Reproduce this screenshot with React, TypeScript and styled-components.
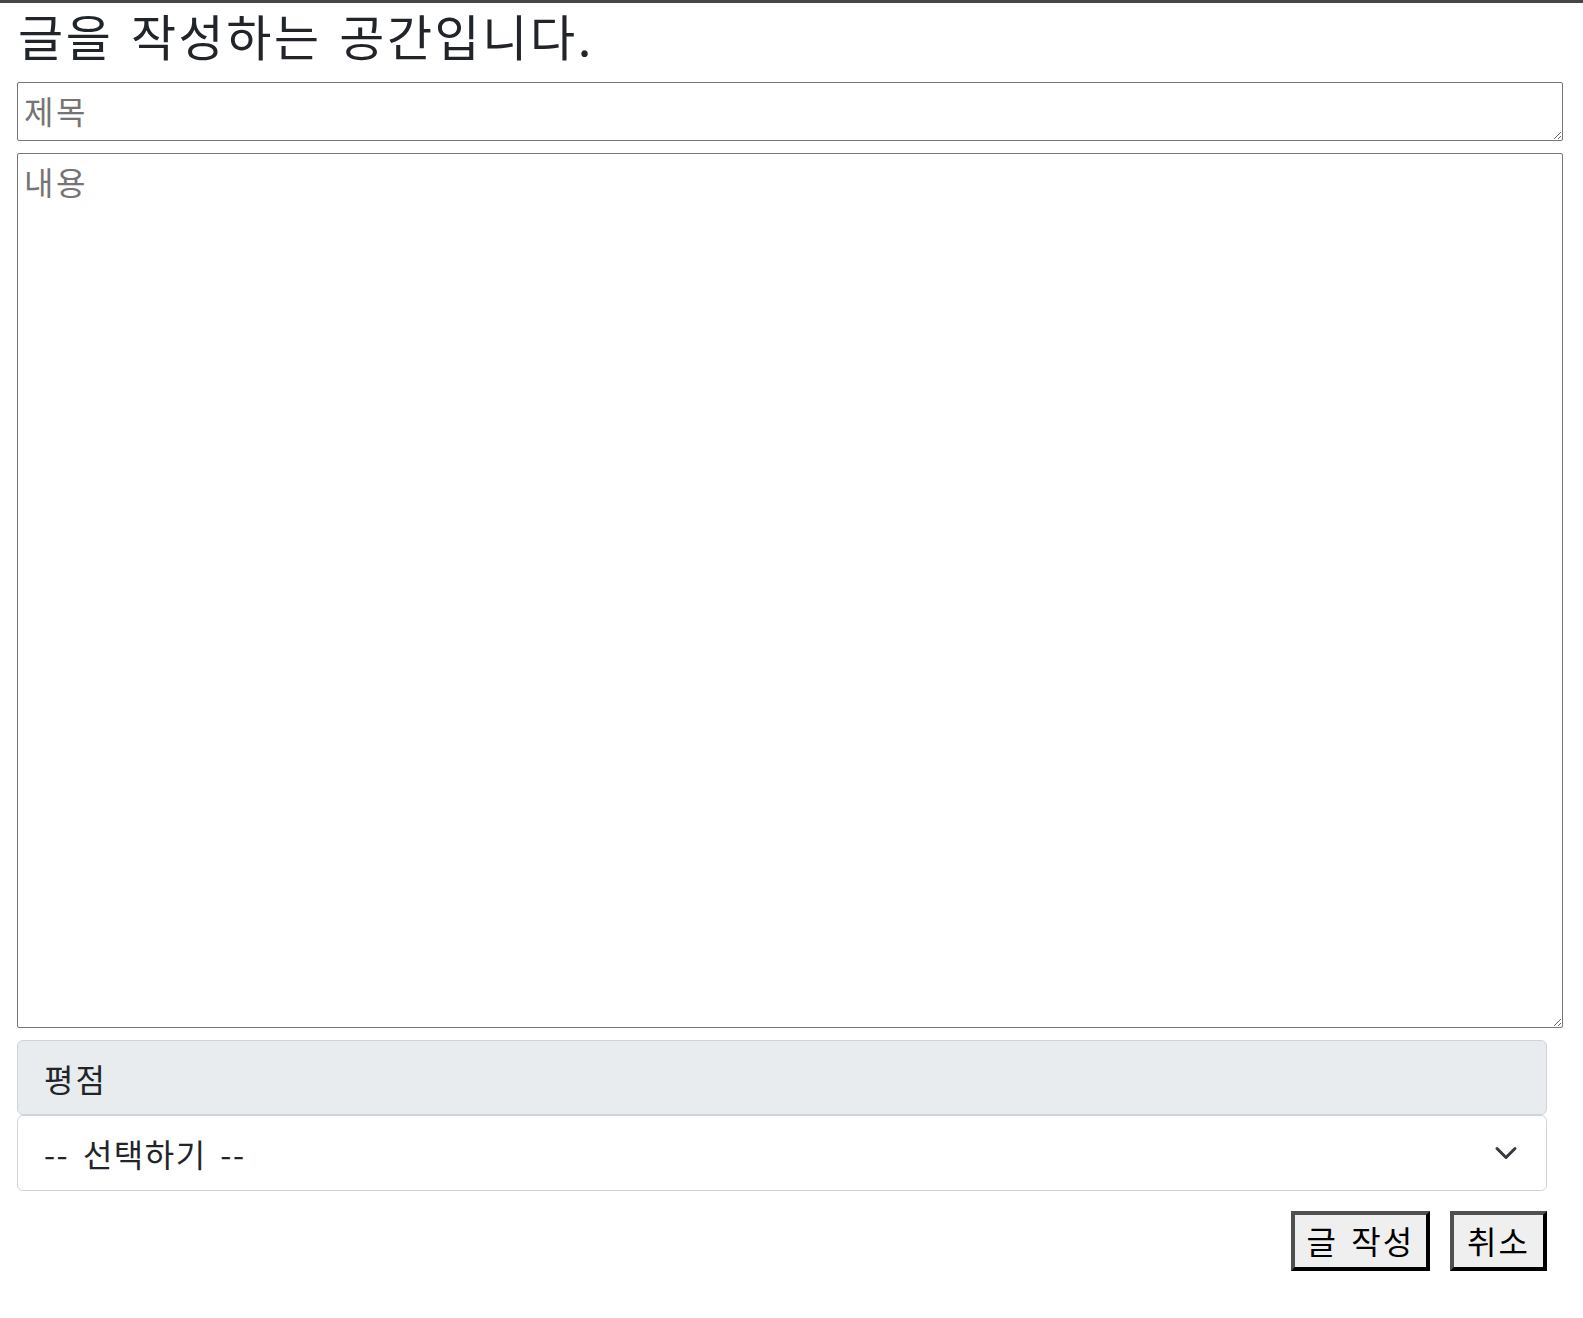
import React from "react";
import styled, { createGlobalStyle } from "styled-components";

const GlobalStyle = createGlobalStyle`
  html, body {
    margin: 0;
    padding: 0;
    background: #ffffff;
  }
  body {
    font-family: "Noto Sans CJK KR", "Noto Sans", sans-serif;
    color: #212529;
  }
  * {
    box-sizing: border-box;
  }
`;

const TopBar = styled.div`
  height: 3px;
  background: #464646;
`;

const Page = styled.div`
  padding: 0 36px 40px 17px;
`;

const Title = styled.h3`
  margin: 7px 0 23px 0;
  font-size: 49px;
  line-height: 49px;
  font-weight: 400;
  letter-spacing: 2.6px;
  word-spacing: 4px;
  color: #212529;
  padding-left: 1px;
`;

const Field = styled.textarea<{ $height: number }>`
  display: block;
  width: calc(100% + 16px);
  height: ${(p) => p.$height}px;
  margin: 0 0 12px 0;
  padding: 8px 6px;
  border: 1px solid #767676;
  border-radius: 2px;
  font-family: "Noto Sans CJK KR", "Noto Sans", sans-serif;
  font-size: 32px;
  line-height: 38px;
  letter-spacing: 2.5px;
  color: #212529;
  background: #ffffff;
  outline: none;

  &::placeholder {
    color: #757575;
  }
`;

const RatingGroup = styled.div`
  display: flex;
  flex-direction: column;
`;

const GroupLabel = styled.div`
  display: flex;
  align-items: center;
  height: 75px;
  padding: 0 26px;
  background: #e9ecef;
  border: 1px solid #ced4da;
  border-radius: 6px;
  font-size: 32px;
  letter-spacing: 2px;
  color: #212529;
`;

const SelectWrap = styled.div`
  position: relative;
  height: 76px;
`;

const Select = styled.select`
  appearance: none;
  -webkit-appearance: none;
  display: block;
  width: 100%;
  height: 100%;
  padding: 0 72px 0 26px;
  border: 1px solid #ced4da;
  border-radius: 6px;
  background: #ffffff;
  font-family: "Noto Sans CJK KR", "Noto Sans", sans-serif;
  font-size: 32px;
  letter-spacing: 1.5px;
  word-spacing: 5px;
  color: #212529;
  outline: none;
`;

const Chevron = styled.svg`
  position: absolute;
  right: 25px;
  top: 50%;
  width: 32px;
  height: 24px;
  transform: translateY(-50%);
  pointer-events: none;
`;

const ButtonRow = styled.div`
  display: flex;
  justify-content: flex-end;
  gap: 20px;
  margin-top: 20px;
`;

const Button = styled.button<{ $padX: number }>`
  height: 60px;
  padding: 0 ${(p) => p.$padX}px 2px;
  border-style: solid;
  border-width: 4px;
  border-color: #505050 #000000 #000000 #505050;
  border-radius: 0;
  background: #efefef;
  font-family: "Noto Sans CJK KR", "Noto Sans", sans-serif;
  font-size: 32px;
  line-height: 50px;
  letter-spacing: 2px;
  word-spacing: 4px;
  color: #000000;
  cursor: pointer;
`;

export default function App() {
  return (
    <>
      <GlobalStyle />
      <TopBar />
      <Page>
        <Title>글을 작성하는 공간입니다.</Title>
        <Field $height={59} placeholder="제목" />
        <Field $height={875} placeholder="내용" />
        <RatingGroup>
          <GroupLabel>평점</GroupLabel>
          <SelectWrap>
            <Select defaultValue="">
              <option value="">-- 선택하기 --</option>
              <option value="1">1</option>
              <option value="2">2</option>
              <option value="3">3</option>
              <option value="4">4</option>
              <option value="5">5</option>
            </Select>
            <Chevron viewBox="0 0 16 16" fill="none">
              <path
                d="M2 5l6 6 6-6"
                stroke="#343a40"
                strokeWidth="2"
                strokeLinecap="round"
                strokeLinejoin="round"
              />
            </Chevron>
          </SelectWrap>
        </RatingGroup>
        <ButtonRow>
          <Button $padX={12}>글 작성</Button>
          <Button $padX={13}>취소</Button>
        </ButtonRow>
      </Page>
    </>
  );
}
